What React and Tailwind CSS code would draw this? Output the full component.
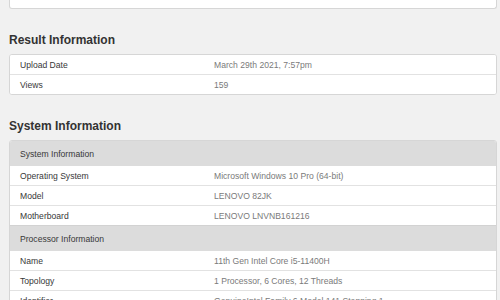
import React from "react";

const font = { fontFamily: '"Liberation Sans", Arial, sans-serif' };

function Row({ label, value, first }) {
  return (
    <div className={`flex items-center bg-white pl-[10px] pt-[1px] ${first ? "h-[19px]" : "h-[20px] border-t border-[#e2e2e2]"}`}>
      <div className="w-[194px] shrink-0 text-[8.6px] text-[#383838]">{label}</div>
      <div className="text-[8.6px] text-[#7a7a7a] whitespace-nowrap">{value}</div>
    </div>
  );
}

function Header({ label, first }) {
  return (
    <div className={`flex items-center bg-[#dcdcdc] pl-[10px] pt-[1px] ${first ? "h-[25px]" : "h-[26px] border-t border-[#d2d2d2]"}`}>
      <div className="text-[8.6px] text-[#383838]">{label}</div>
    </div>
  );
}

export default function App() {
  return (
    <div className="w-[500px] h-[300px] overflow-hidden bg-[#f1f1f1] pl-[9px] pr-[3px]" style={font}>
      <div className="h-[9px] bg-white border border-t-0 border-[#d6d6d6] rounded-b-[3px]" />

      <h2 className="mt-[22px] h-[16px] leading-[16px] pt-[1px] text-[12px] font-bold text-[#333]">Result Information</h2>
      <div className="mt-[7px] border border-[#d6d6d6] rounded-[3px] overflow-hidden bg-white">
        <Row first label="Upload Date" value="March 29th 2021, 7:57pm" />
        <Row label="Views" value="159" />
      </div>

      <h2 className="mt-[22px] h-[16px] leading-[16px] pt-[1px] text-[12px] font-bold text-[#333]">System Information</h2>
      <div className="mt-[7px] border border-[#d6d6d6] rounded-[3px] overflow-hidden bg-white">
        <Header first label="System Information" />
        <Row first label="Operating System" value="Microsoft Windows 10 Pro (64-bit)" />
        <Row label="Model" value="LENOVO 82JK" />
        <Row label="Motherboard" value="LENOVO LNVNB161216" />
        <Header label="Processor Information" />
        <Row first label="Name" value="11th Gen Intel Core i5-11400H" />
        <Row label="Topology" value="1 Processor, 6 Cores, 12 Threads" />
        <Row label="Identifier" value="GenuineIntel Family 6 Model 141 Stepping 1" />
        <Row label="Base Frequency" value="2.69 GHz" />
      </div>
    </div>
  );
}
